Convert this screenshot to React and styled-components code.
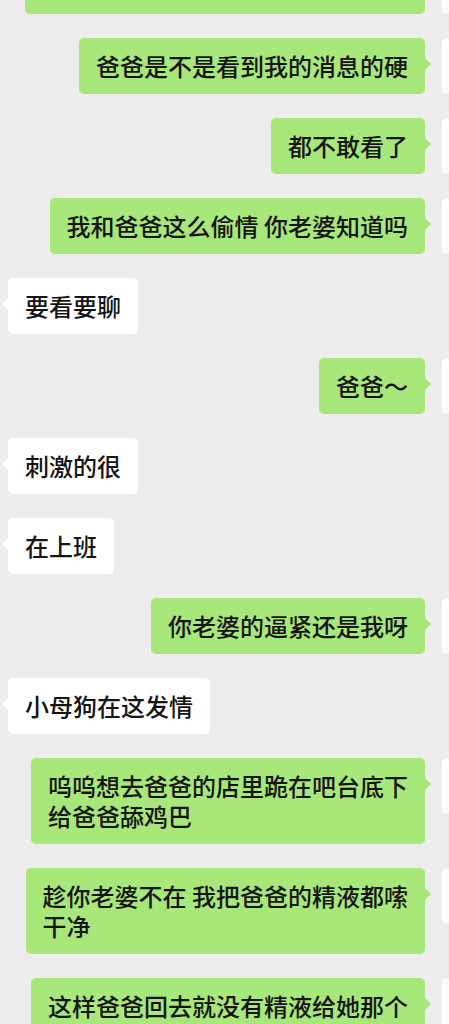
import React from "react";
import styled, { createGlobalStyle, css } from "styled-components";

const Global = createGlobalStyle`
  html, body { margin: 0; padding: 0; background: #ededed; }
  #root { width: 449px; }
`;

const Page = styled.div`
  width: 449px;
  height: 1024px;
  overflow: hidden;
  background: #ededed;
  font-family: "Noto Sans CJK SC", "Noto Sans", sans-serif;
`;

const List = styled.div`
  width: 496px;
  margin-top: -42px;
  padding-left: 8px;
  box-sizing: border-box;
  display: flex;
  flex-direction: column;
  gap: 24px;
`;

const Row = styled.div`
  display: flex;
  align-items: flex-start;
  justify-content: ${(p) => (p.$mine ? "flex-end" : "flex-start")};
  gap: 17px;
`;

const Avatar = styled.div`
  flex: none;
  width: 54px;
  height: 54px;
  margin-top: 1px;
  border-radius: 4px;
  background: #fdfdfd;
`;

const Bubble = styled.div`
  position: relative;
  box-sizing: border-box;
  max-width: 420px;
  padding: 13px 17px;
  border-radius: 5px;
  font-size: 24px;
  line-height: 30px;
  font-weight: 500;
  color: #151515;
  white-space: pre;
  background: ${(p) => (p.$mine ? "#a8e779" : "#ffffff")};
  ${(p) => p.$full && css`width: 400px;`}

  &::after {
    content: "";
    position: absolute;
    top: 20px;
    border-top: 6px solid transparent;
    border-bottom: 6px solid transparent;
    ${(p) =>
      p.$mine
        ? css`
            right: -6px;
            border-left: 6px solid #a8e779;
          `
        : css`
            left: -6px;
            border-right: 6px solid #ffffff;
          `}
  }
`;

const messages = [
  { mine: true, text: "\u00a0", full: true },
  { mine: true, text: "爸爸是不是看到我的消息的硬" },
  { mine: true, text: "都不敢看了" },
  { mine: true, text: "我和爸爸这么偷情 你老婆知道吗" },
  { mine: false, text: "要看要聊" },
  { mine: true, text: "爸爸～" },
  { mine: false, text: "刺激的很" },
  { mine: false, text: "在上班" },
  { mine: true, text: "你老婆的逼紧还是我呀" },
  { mine: false, text: "小母狗在这发情" },
  { mine: true, text: "呜呜想去爸爸的店里跪在吧台底下\n给爸爸舔鸡巴" },
  { mine: true, text: "趁你老婆不在 我把爸爸的精液都嗦\n干净" },
  { mine: true, text: "这样爸爸回去就没有精液给她那个" },
];

export default function App() {
  return (
    <Page>
      <Global />
      <List>
        {messages.map((m, i) => (
          <Row key={i} $mine={m.mine}>
            <Bubble $mine={m.mine} $full={m.full}>
              {m.text}
            </Bubble>
            {m.mine && <Avatar />}
          </Row>
        ))}
      </List>
    </Page>
  );
}
